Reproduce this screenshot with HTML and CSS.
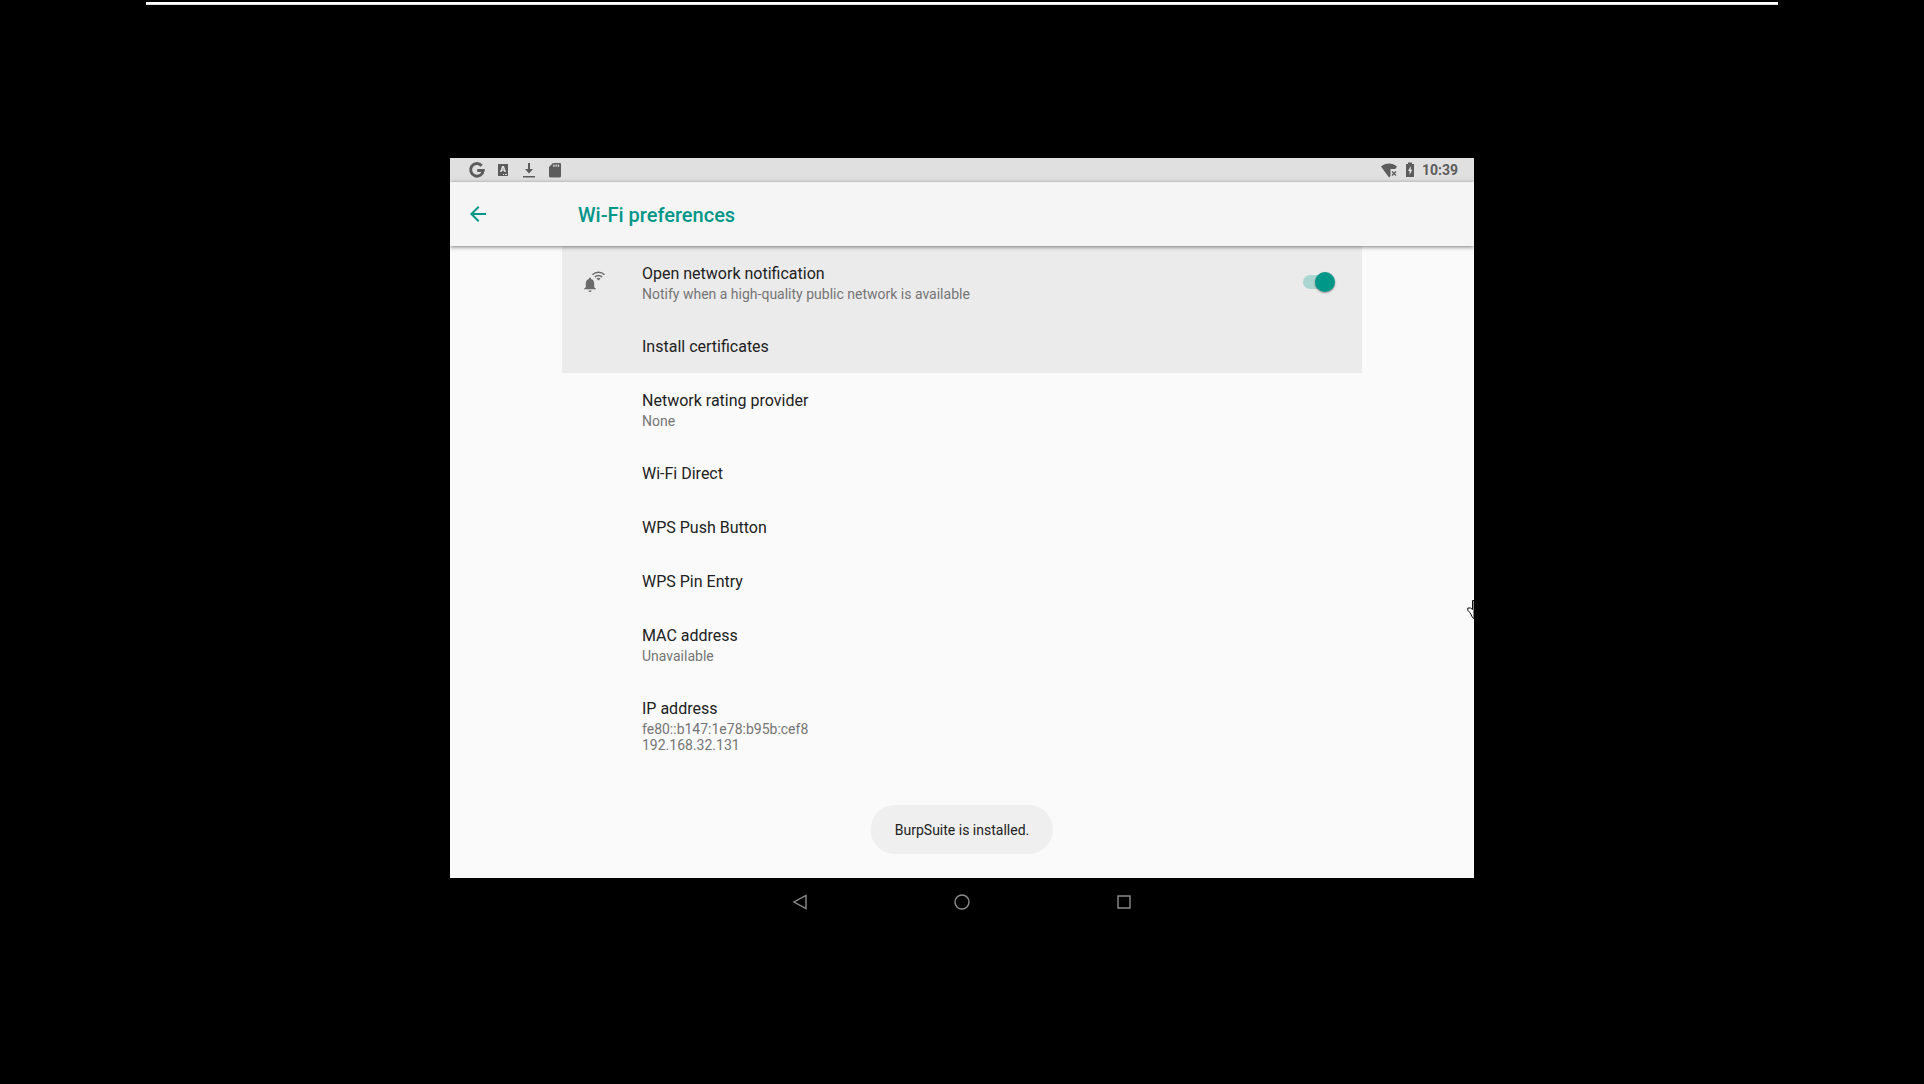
FILE: index.html
```html
<!DOCTYPE html>
<html lang="en">
<head>
<meta charset="utf-8">
<meta name="viewport" content="width=device-width, initial-scale=1">
<title>Wi-Fi preferences</title>
<link rel="stylesheet" href="styles.css">
</head>
<body>
<div class="top-edge"></div>
<div class="device">
  <div class="screen">
    <div class="status-bar">
      <div class="status-icons">
        <svg class="status-icon" viewBox="0 0 18 18" aria-hidden="true"><path class="ring" d="M13.7 4.7A6.3 6.3 0 1 0 15.2 9.6H9.2"/></svg>
        <svg class="status-icon" viewBox="0 0 18 18" aria-hidden="true"><path fill-rule="evenodd" d="M4 3h10v12H4zM8.100 5L6 11h1.600l.4-1.200h2l.4 1.200H12L9.900 5zM9 6.900l.6 1.700H8.400zM9 13h1v1H9zM11 13h2v1h-2z"/></svg>
        <svg class="status-icon" viewBox="0 0 18 18" aria-hidden="true"><path d="M8 2h2v6h3l-4 4.500L5 8h3zM3 15h12v1.500H3z"/></svg>
        <svg class="status-icon" viewBox="0 0 18 18" aria-hidden="true"><path fill-rule="evenodd" d="M7 2h7a1 1 0 0 1 1 1v12a1.500 1.500 0 0 1-1.500 1.500h-9A1.500 1.500 0 0 1 3 15V6zM7.200 3.500v2.200h1.300V3.500zM9.500 3.500v2.200h1.300V3.500zM11.800 3.500v2.200h1.300V3.500z"/></svg>
      </div>
      <div class="status-right">
        <svg class="status-icon" viewBox="0 0 18 18" aria-hidden="true"><path d="M1 5.500C5.500 1.500 12.500 1.500 17 5.500L15.300 8H10.500v7L9 16.500z"/><path class="cross" d="M12 10.500l4 4M16 10.500l-4 4"/></svg>
        <svg class="battery-icon" viewBox="0 0 10 18" aria-hidden="true"><path fill-rule="evenodd" d="M3 1.500h4V3h2v13H1V3h2zM5.800 5L3 10h1.600v4L7.300 8.800H5.800z"/></svg>
        <time>10:39</time>
      </div>
    </div>
    <header class="app-bar">
      <button class="back" type="button" aria-label="Navigate up"><svg viewBox="0 0 24 24" aria-hidden="true"><path d="M20 11H7.830l5.590-5.590L12 4l-8 8 8 8 1.410-1.410L7.830 13H20z"/></svg></button>
      <h1>Wi-Fi preferences</h1>
    </header>
    <main class="list">
      <label class="row raised" for="open-network">
        <svg class="row-icon" viewBox="0 1 24 24" aria-hidden="true">
          <path d="M8 7.500a1 1 0 0 1 1 1v.6c2.100.5 3.200 2.300 3.200 4.500v3.600l1.800 1.500v.6H2v-.6l1.800-1.500v-3.600c0-2.200 1.100-4 3.200-4.500v-.6a1 1 0 0 1 1-1zM6.500 20.500h3a1.500 1.500 0 0 1-3 0z"/>
          <path class="wave" d="M10.500 4.700c3.300-3.200 8.700-3.200 12 0M12.900 7.100c2-2 5.200-2 7.200 0"/>
          <path d="M14.500 8.600a2.900 2.900 0 0 1 4 0l-2 2z"/>
        </svg>
        <span class="text"><span class="title">Open network notification</span><span class="summary">Notify when a high-quality public network is available</span></span>
        <input class="switch" id="open-network" type="checkbox" role="switch" checked>
      </label>
      <button class="row raised" type="button"><span class="text"><span class="title">Install certificates</span></span></button>
      <button class="row" type="button"><span class="text"><span class="title">Network rating provider</span><span class="summary">None</span></span></button>
      <button class="row" type="button"><span class="text"><span class="title">Wi-Fi Direct</span></span></button>
      <button class="row" type="button"><span class="text"><span class="title">WPS Push Button</span></span></button>
      <button class="row" type="button"><span class="text"><span class="title">WPS Pin Entry</span></span></button>
      <div class="row"><div class="text"><span class="title">MAC address</span><span class="summary">Unavailable</span></div></div>
      <div class="row"><div class="text"><span class="title">IP address</span><span class="summary">fe80::b147:1e78:b95b:cef8<br>192.168.32.131</span></div></div>
    </main>
    <div class="toast" role="status">BurpSuite is installed.</div>
    <svg class="pointer" viewBox="0 0 7 20" aria-hidden="true"><path d="M7 .5H5.500v9L3.500 8H.8v2.500L3 12.500l2.500 5L7 18.500z"/></svg>
  </div>
  <nav class="nav-bar" aria-label="System">
    <button type="button" aria-label="Back"><svg viewBox="0 0 18 18" aria-hidden="true"><path d="M15 2.500v13L3 9z"/></svg></button>
    <button type="button" aria-label="Home"><svg viewBox="0 0 18 18" aria-hidden="true"><circle cx="9" cy="9" r="7"/></svg></button>
    <button type="button" aria-label="Recent apps"><svg viewBox="0 0 18 18" aria-hidden="true"><path d="M3 3h12v12H3z"/></svg></button>
  </nav>
</div>
</body>
</html>
```
FILE: styles.css
```css
* {
  box-sizing: border-box;
}

body {
  margin: 0;
  min-height: 100vh;
  display: grid;
  place-items: center;
  background: #000;
  font-family: Roboto, sans-serif;
  color: #212121;
}

button {
  margin: 0;
  padding: 0;
  border: 0;
  background: none;
  font: inherit;
  color: inherit;
  text-align: left;
}

svg {
  display: block;
}

.top-edge {
  position: absolute;
  top: 2px;
  left: 50%;
  width: 85%;
  max-width: 1632px;
  height: 3px;
  background: #fff;
  border-bottom: 1px solid #ddd;
  transform: translateX(-50%);
}

.device {
  width: 100%;
  max-width: 1024px;
}

.screen {
  position: relative;
  overflow: hidden;
  min-height: 720px;
  background: #fafafa;
}

.status-bar {
  display: flex;
  justify-content: space-between;
  height: 24px;
  padding: 0 16px 0 18px;
  background: #e0e0e0;
  color: #5c5c5c;
  font-size: 14px;
  font-weight: 700;
  line-height: 24px;
}

.status-icons,
.status-right {
  display: flex;
  align-items: center;
}

.status-icons {
  gap: 8px;
}

.status-icon {
  width: 18px;
  height: 18px;
  fill: #5c5c5c;
}

.ring {
  fill: none;
  stroke: #5c5c5c;
  stroke-width: 3;
}

.cross {
  fill: none;
  stroke: #5c5c5c;
  stroke-width: 1.3;
}

.status-right {
  gap: 7px;
}

.battery-icon {
  width: 10px;
  height: 18px;
  fill: #5c5c5c;
}

.app-bar {
  position: relative;
  z-index: 1;
  display: flex;
  align-items: center;
  height: 64px;
  padding: 0 16px;
  gap: 88px;
  background: #f5f5f5;
  box-shadow: 0 1px 4px rgba(0, 0, 0, 0.5);
  color: #009688;
}

.back svg {
  width: 24px;
  height: 24px;
  fill: #009688;
}

.app-bar h1 {
  margin: 0;
  padding-top: 2px;
  font-size: 20px;
  font-weight: 500;
  line-height: 24px;
}

.list {
  display: flex;
  flex-direction: column;
  max-width: 800px;
  margin: 0 auto;
}

.row {
  display: grid;
  grid-template-columns: 60px 1fr auto;
  align-items: center;
  padding: 18px 27px 17px 20px;
}

.raised {
  background: #ebebeb;
}

.row-icon {
  width: 24px;
  height: 24px;
  fill: #6b6b6b;
}

.wave {
  fill: none;
  stroke: #6b6b6b;
  stroke-width: 1.5;
}

.text {
  grid-column: 2;
  display: flex;
  flex-direction: column;
  gap: 3px;
}

.title {
  font-size: 16px;
  line-height: 19px;
}

.summary {
  font-size: 14px;
  line-height: 16px;
  color: #757575;
}

.switch {
  appearance: none;
  position: relative;
  width: 32px;
  height: 14px;
  margin: 0 0 2px;
  border-radius: 7px;
  background: linear-gradient(to right, #aad5d0 24px, transparent 24px);
}

.switch::after {
  content: "";
  position: absolute;
  top: -3px;
  right: 0;
  width: 20px;
  height: 20px;
  border-radius: 50%;
  background: #009688;
  box-shadow: 0 1px 2px rgba(0, 0, 0, 0.4);
}

.toast {
  position: absolute;
  bottom: 24px;
  left: 50%;
  padding: 17px 24px 15px;
  border-radius: 24px;
  background: #efefef;
  font-size: 14px;
  line-height: 17px;
  white-space: nowrap;
  transform: translateX(-50%);
}

.pointer {
  position: absolute;
  top: 442px;
  right: 0;
  width: 7px;
  height: 20px;
  fill: #fff;
  stroke: #111;
  stroke-width: 1;
}

.nav-bar {
  display: flex;
  justify-content: center;
  align-items: center;
  gap: 144px;
  height: 48px;
}

.nav-bar svg {
  width: 18px;
  height: 18px;
  fill: none;
  stroke: #8c8c8c;
  stroke-width: 1.4;
}
```
